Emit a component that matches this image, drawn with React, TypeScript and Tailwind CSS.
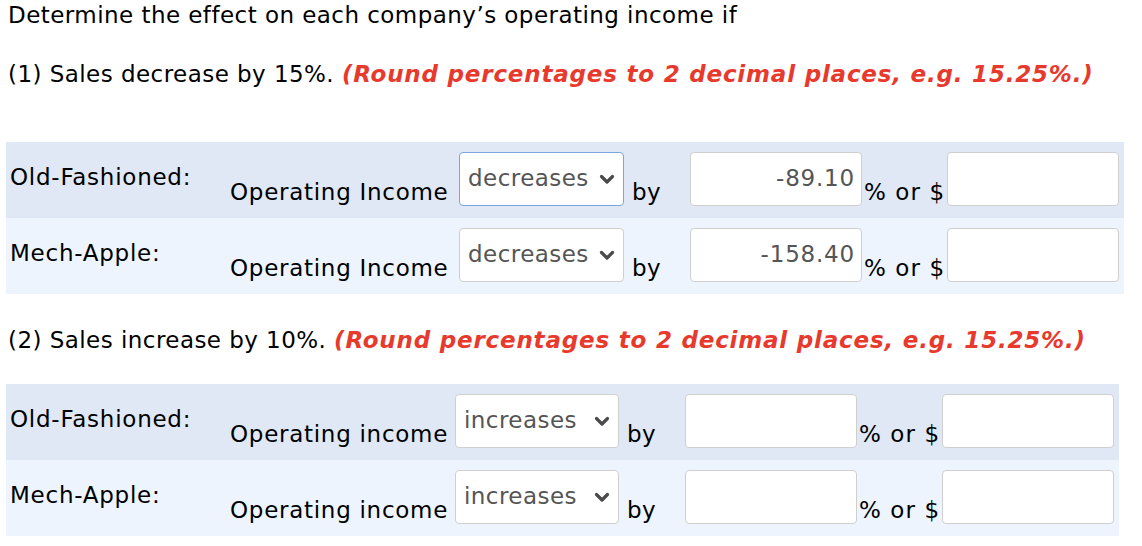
import React from "react";

const font = { fontFamily: '"DejaVu Sans", Verdana, sans-serif' };

function Chevron() {
  return (
    <svg width="16" height="11" viewBox="0 0 16 11" className="shrink-0">
      <path d="M2.5 2.5 L8 8 L13.5 2.5" fill="none" stroke="#4a4a4a" strokeWidth="3.2" strokeLinecap="round" strokeLinejoin="round" />
    </svg>
  );
}

function Row({
  label,
  opLabel,
  select,
  value,
  bg,
  focused,
  opW,
  selW,
}: {
  label: string;
  opLabel: string;
  select: string;
  value: string;
  bg: string;
  focused?: boolean;
  opW: string;
  selW: string;
}) {
  return (
    <div className={`flex h-[76px] ${bg}`}>
      <div className="w-[224px] shrink-0 pl-[4px] pt-[22px] leading-[26px] whitespace-nowrap tracking-[0.75px]">{label}</div>
      <div className={`${opW} shrink-0 pt-[37px] leading-[26px] whitespace-nowrap tracking-[0.72px]`}>{opLabel}</div>
      <div className="pt-[10px]">
        <div
          className={`${selW} h-[54px] flex items-start justify-between rounded-[4px] bg-white pl-[8px] pr-[8px] pt-[12px] text-[#555] leading-[26px] border whitespace-nowrap ${
            focused ? "border-[#7aa6df]" : "border-[#cfcfcf]"
          }`}
        >
          <span>{select}</span>
          <span className="pt-[9px]">
            <Chevron />
          </span>
        </div>
      </div>
      <div className="w-[66px] shrink-0 pl-[8px] pt-[37px] leading-[26px]">by</div>
      <div className="pt-[10px]">
        <div className="w-[172px] h-[54px] rounded-[4px] border border-[#cfcfcf] bg-white pr-[6px] pt-[12px] text-right text-[#555] leading-[26px] tracking-[0.8px]">
          {value}
        </div>
      </div>
      <div className="w-[85px] shrink-0 pl-[2px] pt-[37px] leading-[26px] whitespace-nowrap tracking-[1.1px]">% or $</div>
      <div className="pt-[10px] pr-[5px]">
        <div className="w-[172px] h-[54px] rounded-[4px] border border-[#cfcfcf] bg-white" />
      </div>
    </div>
  );
}

export default function App() {
  return (
    <div className="w-[1142px] h-[546px] bg-white text-[23px] tracking-[0.45px] text-black overflow-hidden" style={font}>
      <div className="pl-[8px] pt-[2px] leading-[26px] whitespace-nowrap">Determine the effect on each company’s operating income if</div>
      <div className="pl-[8px] pt-[33px] leading-[26px] whitespace-nowrap">
        (1) Sales decrease by 15%.{" "}
        <span className="font-bold italic text-[#e8392d] tracking-[0.8px]">(Round percentages to 2 decimal places, e.g. 15.25%.)</span>
      </div>
      <div className="mt-[55px] ml-[6px] w-fit">
        <Row label="Old-Fashioned:" opLabel="Operating Income" select="decreases" value="-89.10" bg="bg-[#dfe8f4]" focused opW="w-[229px]" selW="w-[165px]" />
        <Row label="Mech-Apple:" opLabel="Operating Income" select="decreases" value="-158.40" bg="bg-[#edf4fd]" opW="w-[229px]" selW="w-[165px]" />
      </div>
      <div className="pl-[8px] pt-[33px] leading-[26px] whitespace-nowrap">
        (2) Sales increase by 10%.{" "}
        <span className="font-bold italic text-[#e8392d] tracking-[0.8px]">(Round percentages to 2 decimal places, e.g. 15.25%.)</span>
      </div>
      <div className="mt-[31px] ml-[6px] w-fit">
        <Row label="Old-Fashioned:" opLabel="Operating income" select="increases" value="" bg="bg-[#dfe8f4]" opW="w-[225px]" selW="w-[164px]" />
        <Row label="Mech-Apple:" opLabel="Operating income" select="increases" value="" bg="bg-[#edf4fd]" opW="w-[225px]" selW="w-[164px]" />
      </div>
    </div>
  );
}
